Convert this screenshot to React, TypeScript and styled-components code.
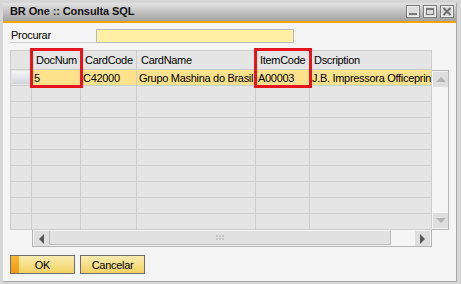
import React from "react";
import styled, { createGlobalStyle } from "styled-components";

const Global = createGlobalStyle`
  html, body { margin: 0; padding: 0; background: #ffffff; }
  body { font-family: "Liberation Sans", Arial, sans-serif; font-size: 11px; color: #000; letter-spacing: -0.3px; }
  * { box-sizing: border-box; }
`;

const Window = styled.div`
  width: 461px;
  height: 284px;
  background: #d6d6d6;
  padding: 3px 4px 2px 3px;
  display: flex;
  flex-direction: column;
`;

const Inner = styled.div`
  flex: 1;
  display: flex;
  flex-direction: column;
  border-right: 1px solid #a8a8a8;
  border-bottom: 1px solid #a8a8a8;
  background: #f5f5f5;
`;

const TitleBar = styled.div`
  height: 20px;
  display: flex;
  align-items: center;
  justify-content: space-between;
  padding: 0 2px 2px 7px;
  background: linear-gradient(to bottom, #e3e3e3 0%, #c4c4c4 45%, #a2a2a2 100%);
  border-bottom: 2px solid #f4a400;
`;

const Title = styled.span`
  font-weight: bold;
  font-size: 11px;
  color: #111;
  letter-spacing: -0.1px;
`;

const TitleButtons = styled.div`
  display: flex;
  gap: 3px;
  margin-top: 1px;
`;

const TitleBtn = styled.div`
  width: 14px;
  height: 13px;
  display: flex;
`;

const Body = styled.div`
  flex: 1;
  display: flex;
  flex-direction: column;
  padding: 6px 0 0 7px;
`;

const SearchRow = styled.div`
  display: flex;
  height: 14px;
`;

const SearchLabel = styled.div`
  width: 86px;
  height: 14px;
  line-height: 12px;
  padding-left: 1px;
  border-bottom: 1px solid #cfcfcf;
`;

const SearchInput = styled.div`
  width: 198px;
  height: 14px;
  background: #fff0a6;
  border: 1px solid #b9b9b9;
`;

const Grid = styled.div`
  margin-top: 7px;
  display: grid;
  grid-template-columns: 22px 49px 56px 119px 54px 122px 17px;
  grid-template-rows: 20px repeat(10, 16px) 17px;
  width: 439px;
`;

const Cell = styled.div<{ $r: number; $c: number; $header?: boolean; $sel?: boolean }>`
  grid-row: ${(p) => p.$r};
  grid-column: ${(p) => p.$c};
  background: ${(p) => (p.$sel ? "#fde18b" : "#e5e5e5")};
  border-right: 1px solid #cdcdcd;
  border-bottom: 1px solid #cdcdcd;
  ${(p) => (p.$header ? "border-top: 1px solid #cdcdcd;" : "")}
  padding-left: ${(p) => (p.$header ? "4px" : "2px")};
  line-height: ${(p) => (p.$header ? "18px" : "16px")};
  white-space: nowrap;
  overflow: hidden;
`;

const RowHead = styled.div<{ $r: number; $active?: boolean; $header?: boolean }>`
  grid-row: ${(p) => p.$r};
  grid-column: 1;
  border-left: 1px solid #cdcdcd;
  border-right: 1px solid #cdcdcd;
  border-bottom: 1px solid #cdcdcd;
  ${(p) => (p.$header ? "border-top: 1px solid #cdcdcd;" : "")}
  background: #e5e5e5;
  padding: 1px;
  display: flex;
  &::after {
    content: "";
    flex: 1;
    ${(p) =>
      p.$active
        ? "background: linear-gradient(to bottom, #f6f6f8 0%, #e4e6ea 50%, #cfd2d8 100%);"
        : ""}
  }
`;

const Highlight = styled.div<{ $col: number }>`
  grid-column: ${(p) => p.$col};
  grid-row: 1 / 3;
  margin: -2px;
  border: 3px solid #e8141b;
  pointer-events: none;
  z-index: 2;
`;

const VScroll = styled.div`
  grid-column: 7;
  grid-row: 2 / 12;
  border-top: 1px solid #b4b4b4;
  border-right: 1px solid #b4b4b4;
  border-bottom: 1px solid #b4b4b4;
  background: #f5f5f5;
  display: flex;
  flex-direction: column;
  justify-content: space-between;
  padding: 1px;
`;

const ArrowBtn = styled.div`
  width: 15px;
  height: 15px;
  background: #dedede;
  display: flex;
  align-items: center;
  justify-content: center;
`;

const HScroll = styled.div`
  grid-column: 2 / 7;
  grid-row: 12;
  border-left: 1px solid #b4b4b4;
  border-right: 1px solid #b4b4b4;
  border-bottom: 1px solid #b4b4b4;
  background: #f5f5f5;
  display: flex;
  align-items: stretch;
  padding: 1px;
`;

const Thumb = styled.div`
  width: 342px;
  background: #e1e1e1;
  border: 1px solid #b9b9b9;
  border-top: none;
  display: flex;
  align-items: center;
  justify-content: center;
`;

const Spacer = styled.div`
  flex: 1;
`;

const Footer = styled.div`
  display: flex;
  gap: 5px;
  margin-top: 8px;
`;

const Button = styled.div<{ $primary?: boolean }>`
  width: 65px;
  height: 19px;
  border: 1px solid #6e6e6e;
  background: linear-gradient(to bottom, #fbeab0 0%, #f7e08a 50%, #f2d163 100%);
  display: flex;
  align-items: center;
  justify-content: center;
  position: relative;
  ${(p) =>
    p.$primary
      ? `&::before { content: ""; position: absolute; left: 0; top: 0; bottom: 0; width: 8px;
         background: linear-gradient(to bottom, #f7b733 0%, #f29a12 100%); }`
      : ""}
`;

const cols = ["DocNum", "CardCode", "CardName", "ItemCode", "Dscription"];
const row1 = ["5", "C42000", "Grupo Mashina do Brasil", "A00003", "J.B. Impressora Officeprint"];

const Tri = ({ dir, color }: { dir: "up" | "down" | "left" | "right"; color: string }) => {
  const pts: Record<string, string> = {
    up: "0,5 5,0 10,5",
    down: "0,0 10,0 5,5",
    left: "5,0 5,10 0,5",
    right: "0,0 0,10 5,5",
  };
  const vert = dir === "up" || dir === "down";
  return (
    <svg width={vert ? 10 : 5} height={vert ? 5 : 10} viewBox={vert ? "0 0 10 5" : "0 0 5 10"}>
      <polygon points={pts[dir]} fill={color} />
    </svg>
  );
};

const WinIcon = ({ kind }: { kind: "min" | "max" | "close" }) => (
  <svg width="14" height="13" viewBox="0 0 14 13">
    <rect x="0.5" y="0.5" width="13" height="12" fill="#dcdcdc" stroke="#7c7c7c" />
    <rect x="1.5" y="1.5" width="11" height="10" fill="none" stroke="#f0f0f0" />
    {kind === "min" && <rect x="3" y="8" width="8" height="2" fill="#7a7a7a" />}
    {kind === "max" && (
      <>
        <rect x="3.5" y="3.5" width="7" height="6" fill="none" stroke="#7a7a7a" />
        <rect x="3" y="3" width="8" height="2" fill="#7a7a7a" />
      </>
    )}
    {kind === "close" && (
      <path d="M3.5 3 L10.5 10 M10.5 3 L3.5 10" stroke="#6e6e6e" strokeWidth="2" />
    )}
  </svg>
);

export default function App() {
  const emptyRows = Array.from({ length: 9 }, (_, i) => i + 3);
  return (
    <>
      <Global />
      <Window>
        <Inner>
          <TitleBar>
            <Title>BR One :: Consulta SQL</Title>
            <TitleButtons>
              <TitleBtn><WinIcon kind="min" /></TitleBtn>
              <TitleBtn><WinIcon kind="max" /></TitleBtn>
              <TitleBtn><WinIcon kind="close" /></TitleBtn>
            </TitleButtons>
          </TitleBar>
          <Body>
            <SearchRow>
              <SearchLabel>Procurar</SearchLabel>
              <SearchInput />
            </SearchRow>
            <Grid>
              <RowHead $r={1} $header />
              {cols.map((c, i) => (
                <Cell key={c} $r={1} $c={i + 2} $header>
                  {c}
                </Cell>
              ))}
              <RowHead $r={2} $active />
              {row1.map((v, i) => (
                <Cell key={i} $r={2} $c={i + 2} $sel>
                  {v}
                </Cell>
              ))}
              {emptyRows.map((r) => (
                <React.Fragment key={r}>
                  <RowHead $r={r} />
                  {cols.map((c, i) => (
                    <Cell key={c} $r={r} $c={i + 2} />
                  ))}
                </React.Fragment>
              ))}
              <VScroll>
                <ArrowBtn><Tri dir="up" color="#b3b3b3" /></ArrowBtn>
                <ArrowBtn><Tri dir="down" color="#b3b3b3" /></ArrowBtn>
              </VScroll>
              <HScroll>
                <ArrowBtn><Tri dir="left" color="#555" /></ArrowBtn>
                <Thumb>
                  <svg width="8" height="5" viewBox="0 0 8 5">
                    {[0, 3, 6].map((x) =>
                      [0, 3].map((y) => <rect key={`${x}-${y}`} x={x} y={y} width="2" height="2" fill="#c4c4c4" />)
                    )}
                  </svg>
                </Thumb>
                <Spacer />
                <ArrowBtn><Tri dir="right" color="#555" /></ArrowBtn>
              </HScroll>
              <Highlight $col={2} />
              <Highlight $col={5} />
            </Grid>
            <Footer>
              <Button $primary>OK</Button>
              <Button>Cancelar</Button>
            </Footer>
          </Body>
        </Inner>
      </Window>
    </>
  );
}
